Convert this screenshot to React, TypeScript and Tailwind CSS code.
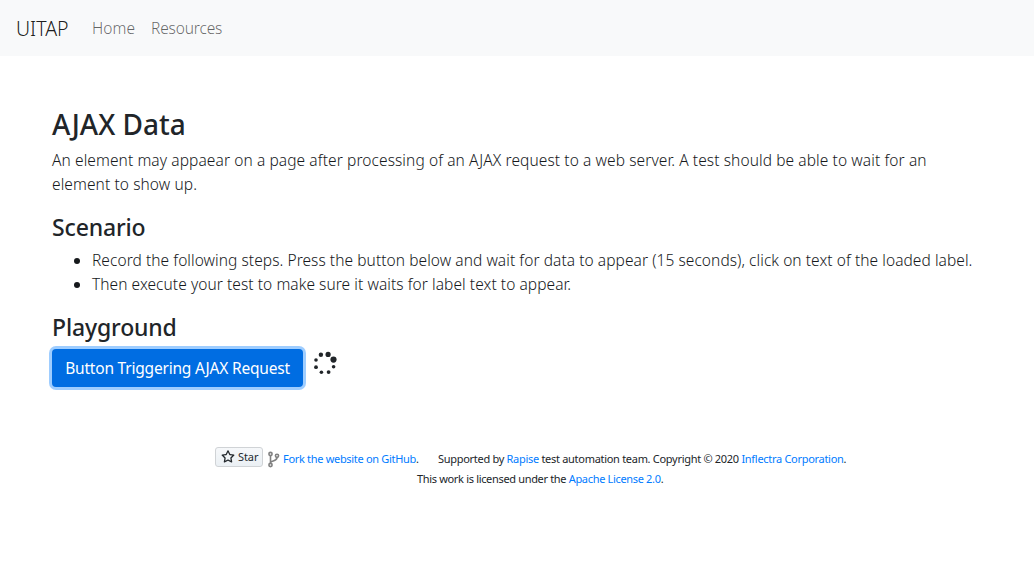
import type { ReactNode } from "react";

const dots = [
  { cx: 20.5, cy: 9.6, r: 3.1 },
  { cx: 15.1, cy: 4.4, r: 2.6 },
  { cx: 7.9, cy: 4.7, r: 2.2 },
  { cx: 3, cy: 10, r: 1.8 },
  { cx: 3, cy: 17.2, r: 1.9 },
  { cx: 8.4, cy: 22.2, r: 1.8 },
  { cx: 15.6, cy: 22.1, r: 1.9 },
  { cx: 20.6, cy: 16.8, r: 1.8 },
];

function Spinner() {
  return (
    <svg width="26" height="26" viewBox="0 0 26 26" className="ml-[10px] mt-[1px] shrink-0 fill-[#212529]">
      {dots.map((d) => (
        <circle key={`${d.cx}-${d.cy}`} cx={d.cx} cy={d.cy} r={d.r} />
      ))}
    </svg>
  );
}

function Link({ children }: { children: ReactNode }) {
  return <a href="#" className="text-[#007bff]">{children}</a>;
}

export default function App() {
  return (
    <div className="min-h-[585px] bg-white font-['Noto_Sans','Open_Sans',sans-serif] text-[15.5px] leading-6 text-[#212529]">
      <nav className="flex h-14 items-center bg-[#f8f9fa] px-4 font-light">
        <a href="#" className="w-[76px] pt-px text-[19.5px] text-black/90">UITAP</a>
        <a href="#" className="w-[59px] tracking-[0.1px] text-black/60">Home</a>
        <a href="#" className="tracking-[-0.15px] text-black/60">Resources</a>
      </nav>
      <main className="px-[52px] pt-[52px] whitespace-nowrap">
        <h3 className="mb-[7px] h-[33px] text-[28px] leading-[33px] font-medium">AJAX Data</h3>
        <p className="mb-4 font-light tracking-[0.095px] text-[#16191c]">
          <span>An element may appaear on a page after processing of an AJAX request to a web server. A test should be able to wait for an</span>
          <br />
          <span>element to show up.</span>
        </p>
        <h4 className="mb-2 h-7 text-[23px] leading-[30px] font-medium tracking-[-0.15px]">Scenario</h4>
        <ul className="mb-4 list-disc pl-10 font-light tracking-[0.065px] text-[#16191c]">
          <li><span>Record the following steps. Press the button below and wait for data to appear (15 seconds), click on text of the loaded label.</span></li>
          <li><span>Then execute your test to make sure it waits for label text to appear.</span></li>
        </ul>
        <h4 className="mb-2 h-[29px] text-[23px] leading-[30px] font-medium tracking-[-0.15px]">Playground</h4>
        <div className="flex items-start">
          <button className="h-[38px] w-[251px] rounded-[4px] bg-[#006de2] text-center tracking-[-0.2px] text-white shadow-[0_0_0_3px_rgba(0,123,255,0.38)]">Button Triggering AJAX Request</button>
          <Spinner />
        </div>
      </main>
      <footer className="mt-[60px] text-[11px] leading-5 tracking-[-0.31px] whitespace-nowrap">
        <div className="flex h-5 pl-[215px]">
          <span className="flex h-5 w-12 items-center rounded-[3px] border border-[#d0d3d6] bg-linear-to-b from-[#f6f8fa] to-[#ebf0f4] pl-[5px] tracking-[-0.1px] text-[#24292e]">
            <svg width="14" height="14" viewBox="0 0 16 16" className="mr-[3px] fill-current">
              <path d="M8 .25a.75.75 0 0 1 .673.418l1.882 3.815 4.21.612a.75.75 0 0 1 .416 1.279l-3.046 2.97.719 4.192a.75.75 0 0 1-1.088.791L8 12.347l-3.766 1.98a.75.75 0 0 1-1.088-.79l.72-4.194L.818 6.374a.75.75 0 0 1 .416-1.28l4.21-.611L7.327.668A.75.75 0 0 1 8 .25zm0 2.445L6.615 5.5a.75.75 0 0 1-.564.41l-3.097.45 2.24 2.184a.75.75 0 0 1 .216.664l-.528 3.084 2.769-1.456a.75.75 0 0 1 .698 0l2.77 1.456-.53-3.084a.75.75 0 0 1 .216-.664l2.24-2.183-3.096-.45a.75.75 0 0 1-.564-.41L8 2.694z" />
            </svg>
            Star
          </span>
          <svg width="12" height="17" viewBox="0 0 12 17" className="mt-[4px] ml-[5px] mr-[3px] fill-none stroke-[#808080] stroke-[1.6]">
            <circle cx="2.5" cy="3" r="1.6" />
            <circle cx="9" cy="4.8" r="1.6" />
            <circle cx="2.5" cy="14" r="1.6" />
            <path d="M2.5 4.8v7.4M9 6.6c0 4.4-6.5 2.6-6.5 5.4" />
          </svg>
          <span className="mt-[2px] w-[155px]"><Link>Fork the website on GitHub</Link>.</span>
          <span className="mt-[2px] tracking-[-0.295px]">Supported by <Link>Rapise</Link> test automation team. Copyright © 2020 <Link>Inflectra Corporation</Link>.</span>
        </div>
        <div className="mt-[2px] pl-[417px] tracking-[-0.33px]">This work is licensed under the <Link>Apache License 2.0</Link>.</div>
      </footer>
    </div>
  );
}
